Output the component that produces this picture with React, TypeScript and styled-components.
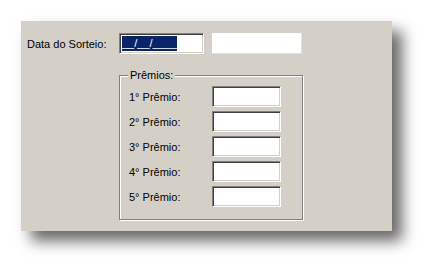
import styled, { createGlobalStyle } from "styled-components";

const GlobalStyle = createGlobalStyle`
  html, body {
    margin: 0;
    padding: 0;
    background: #ffffff;
  }
  body {
    font-family: "Liberation Sans", Arial, sans-serif;
    font-size: 11px;
    color: #000;
  }
`;

const Page = styled.div`
  padding: 21px 0 0 21px;
  min-height: 273px;
  box-sizing: border-box;
`;

const Panel = styled.div`
  width: 371px;
  height: 210px;
  box-sizing: border-box;
  background: #d4d0c8;
  box-shadow: 10px 10px 14px rgba(0, 0, 0, 0.6);
  padding: 12px 0 0 6px;
  display: flex;
  flex-direction: column;
`;

const TopRow = styled.div`
  display: flex;
  align-items: center;
  height: 21px;
`;

const Label = styled.span<{ $width: number }>`
  width: ${(p) => p.$width}px;
  flex-shrink: 0;
  white-space: nowrap;
`;

const Input = styled.div<{ $width: number }>`
  width: ${(p) => p.$width}px;
  height: 21px;
  box-sizing: border-box;
  background: #ffffff;
  border: 1px solid;
  border-color: #808080 #ffffff #ffffff #808080;
  box-shadow: inset 1px 1px 0 #404040, inset -1px -1px 0 #d4d0c8;
  display: flex;
  align-items: center;
  padding-left: 2px;
`;

const FlatInput = styled.div<{ $width: number }>`
  width: ${(p) => p.$width}px;
  height: 21px;
  box-sizing: border-box;
  background: #ffffff;
  border-right: 1px solid #e4e2dc;
  border-bottom: 1px solid #e4e2dc;
  margin-left: 8px;
`;

const Selected = styled.span`
  background: #0a246a;
  color: #ffffff;
  line-height: 15px;
  height: 15px;
  display: inline-block;
`;

const GroupBox = styled.div`
  position: relative;
  margin: 21px 0 0 92px;
  width: 184px;
  height: 145px;
  box-sizing: border-box;
  border: 1px solid #808080;
  box-shadow: 1px 1px 0 #ffffff, inset 1px 1px 0 #ffffff;
  padding: 10px 0 0 9px;
  display: flex;
  flex-direction: column;
  gap: 4px;
`;

const Legend = styled.span`
  position: absolute;
  top: -7px;
  left: 8px;
  padding: 0 2px;
  background: #d4d0c8;
  line-height: 13px;
`;

const PrizeRow = styled.div`
  display: flex;
  align-items: center;
  height: 21px;
`;

const prizes = ["1° Prêmio:", "2° Prêmio:", "3° Prêmio:", "4° Prêmio:", "5° Prêmio:"];

export default function App() {
  return (
    <>
      <GlobalStyle />
      <Page>
        <Panel>
          <TopRow>
            <Label $width={92}>Data do Sorteio:</Label>
            <Input $width={85}>
              <Selected>__/__/____</Selected>
            </Input>
            <FlatInput $width={90} />
          </TopRow>
          <GroupBox>
            <Legend>Prêmios:</Legend>
            {prizes.map((p) => (
              <PrizeRow key={p}>
                <Label $width={83}>{p}</Label>
                <Input $width={69} />
              </PrizeRow>
            ))}
          </GroupBox>
        </Panel>
      </Page>
    </>
  );
}
